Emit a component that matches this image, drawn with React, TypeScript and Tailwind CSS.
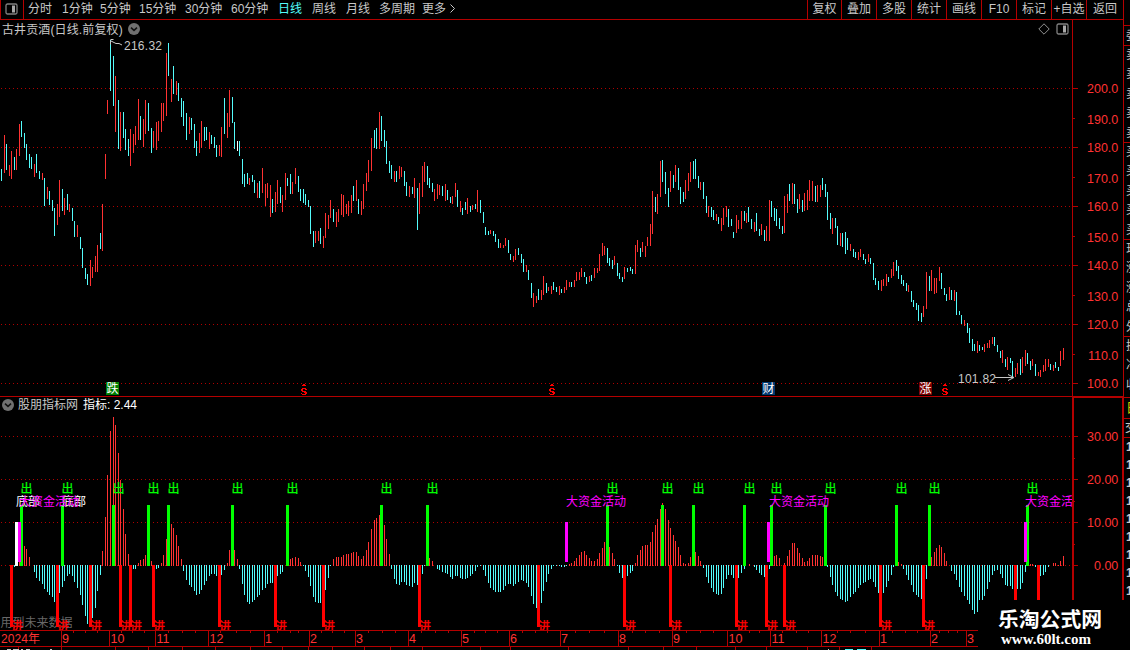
import React from "react";

const CJK = "font-['Liberation_Sans','Noto_Sans_CJK_SC',sans-serif]";

// Each candle: colour (r = up, c = down), x, high, low
const CANDLES = `c1 169 181,r4 135 173,c6 144 170,r9 165 176,r11 151 179,c14 157 170,r16 149 170,r19 124 156,c21 121 137,c24 133 148,c26 144 160,c29 154 168,c31 157 169,r34 164 177,c36 154 173,c39 171 179,r42 173 180,c44 178 206,r47 187 199,c49 191 205,c52 200 211,c54 208 236,r57 204 225,r59 180 217,c62 189 211,r64 198 215,c67 194 210,r69 204 212,c72 208 221,c74 221 237,r77 225 237,c80 237 249,c82 248 268,c85 268 279,c87 274 285,r90 260 286,r92 267 278,r95 256 272,r97 245 272,c100 233 249,r102 204 251,r105 154 179,r107 100 114,c110 40 91,c113 56 106,r115 76 132,c118 100 149,r120 112 151,c123 112 138,c125 129 150,c128 139 156,r130 129 166,r133 134 153,r135 126 145,r138 99 140,c140 116 140,r143 119 147,r145 100 134,c148 103 131,c151 128 153,r153 131 148,r156 122 150,r158 121 141,r161 103 132,r163 103 121,r166 53 116,c168 43 76,r171 79 102,c173 66 94,r176 81 95,c178 83 101,c181 98 117,c183 101 126,c186 113 140,r189 117 134,c191 118 130,c194 124 148,c196 141 156,r199 133 153,r201 121 148,c204 127 141,c206 127 140,r209 132 149,c211 135 144,c214 137 148,c216 145 157,r219 145 156,r221 127 157,c224 98 134,r227 113 138,r229 90 127,c232 97 123,c234 122 149,w237 141 151,c239 141 156,c242 159 184,c244 174 187,c247 173 184,r249 178 185,c252 175 182,c254 180 193,r257 183 198,c259 181 198,r262 168 193,r265 184 206,r267 183 198,r270 185 217,c272 199 213,r275 192 212,r277 180 204,c280 187 203,r282 195 212,r285 173 200,c287 178 186,c290 174 194,r292 182 194,r295 168 184,c298 176 192,c300 189 201,c303 189 203,c305 194 205,c308 200 207,c310 206 234,c313 231 247,r315 231 243,r318 231 241,c320 228 244,r323 236 248,r325 213 238,r328 215 229,r330 200 218,c333 209 222,r336 212 227,r338 209 222,r341 194 215,r343 195 217,r346 204 214,r348 201 216,r351 195 213,c353 186 201,r356 180 201,c358 199 214,r361 201 215,r363 184 209,r366 173 191,r368 160 182,r371 138 171,c374 130 148,c376 128 149,r379 112 149,c381 116 141,c384 130 147,c386 141 164,c389 161 173,c391 165 179,r394 171 182,c396 171 182,r399 166 179,r401 167 177,c404 171 186,c406 182 196,r409 186 197,c412 187 194,r414 178 198,c417 188 230,r419 183 214,r422 166 197,r424 162 182,c427 166 185,c429 178 188,c432 183 192,r434 189 201,r437 184 199,r439 185 195,c442 186 196,r445 184 201,c447 190 200,c450 197 203,r452 196 204,r455 183 197,c457 190 207,r460 201 212,c462 208 215,c465 202 210,r467 198 214,c470 206 212,r472 205 210,c475 204 209,r477 190 212,c480 200 213,c483 212 223,c485 227 235,c488 231 235,r490 230 234,c493 231 236,c495 234 242,c498 239 248,r500 243 248,r503 245 248,r505 238 246,c508 240 253,c510 254 260,r513 256 262,r515 249 260,c518 248 255,c521 254 263,c523 259 272,r526 265 272,c528 270 280,c531 283 298,r533 293 307,r536 296 303,c538 289 300,r541 290 300,r543 276 295,c546 283 293,r548 287 291,r551 286 294,c553 282 290,c556 287 292,r559 286 295,c561 289 293,r564 287 293,r566 280 290,r569 282 287,c571 282 287,r574 280 287,r576 272 281,r579 272 280,r581 268 277,c584 272 277,c586 277 284,r589 276 282,c591 275 281,r594 268 278,r597 268 273,r599 254 271,r602 243 256,r604 246 255,c607 248 263,c609 258 266,c612 260 269,r614 256 265,c617 263 276,c619 273 279,c622 277 282,r624 267 279,c627 268 272,c630 267 271,c632 269 274,r635 245 274,r637 240 252,c640 248 257,r642 242 252,r645 246 257,r647 237 246,r650 224 246,r652 191 234,c655 197 212,r657 194 214,r660 161 197,c662 160 182,c665 172 194,c668 188 207,r670 171 192,c673 175 188,r675 165 182,c678 168 190,c680 187 204,c683 192 202,r685 180 199,r688 173 191,r690 162 182,c693 161 179,c695 159 179,c698 176 188,r700 182 190,c703 182 199,c706 196 213,r708 206 217,c711 207 217,c713 210 220,r716 214 221,c718 217 224,r721 218 231,r723 208 225,r726 206 217,c728 209 227,c731 219 226,c733 232 238,r736 215 233,r738 220 229,r741 211 229,c744 211 221,r746 213 223,c748 207 222,c751 219 229,r754 222 232,c756 213 231,c759 229 236,r761 224 235,c764 230 241,r766 226 241,r769 200 241,c771 201 217,c774 208 221,c776 209 226,c779 218 229,c782 226 234,r784 196 233,r787 194 213,c789 184 201,r792 183 204,c794 184 204,c797 199 213,r799 194 209,c802 200 212,r804 193 211,r807 190 210,r809 180 201,r812 181 201,c815 186 202,r817 185 202,r820 185 197,c822 178 190,c825 184 197,c827 192 220,c830 213 229,r832 218 234,c835 218 228,c837 226 245,r840 233 246,c842 233 247,c845 232 254,c847 238 250,r850 244 251,c853 249 257,c855 252 258,r858 252 260,r860 249 257,c863 254 260,c865 259 264,r868 254 262,c870 258 264,c873 263 280,c875 278 285,c878 281 290,r881 280 291,r883 279 286,r886 274 286,c888 277 282,r891 269 278,r893 262 276,c896 260 271,c898 266 279,c901 275 284,c903 280 286,c906 283 291,r908 285 292,c911 291 302,c913 300 307,c916 303 310,c918 305 321,c921 313 322,r923 306 317,r926 272 309,c929 276 291,r931 270 291,r934 278 294,r936 278 293,r939 267 281,c941 273 289,c944 288 295,c946 294 301,r949 287 300,c951 290 300,r954 290 301,c956 292 315,c959 311 315,c961 315 324,r964 320 326,c967 323 333,c969 328 343,c972 339 351,c974 344 351,r977 341 353,c979 345 351,c982 347 350,r984 344 352,r987 343 348,r989 340 348,r992 337 344,c994 337 346,c997 345 352,c1000 351 358,r1002 350 363,c1005 359 367,r1007 357 370,c1010 358 363,c1012 361 377,r1015 368 377,r1017 363 374,c1020 359 375,r1022 357 373,r1025 350 366,c1027 353 364,c1030 361 370,r1032 359 366,c1035 364 376,r1038 372 376,r1040 370 377,r1043 365 372,r1045 359 371,r1048 359 367,c1050 364 370,r1053 365 371,c1055 362 368,c1058 367 371,r1060 351 366,r1063 348 360`;

// Each histogram bar: x and the y of its tip; the zero line is at 565
const HISTO = `14 567,19 560,24 546,26 549,29 557,34 572,36 578,39 581,42 584,44 589,47 592,49 595,52 597,54 602,59 593,62 587,64 581,67 576,69 574,72 576,74 582,77 588,80 595,82 605,85 616,87 624,92 618,95 608,97 591,100 575,102 551,105 517,107 475,110 431,113 417,115 425,118 453,120 480,123 509,125 534,128 554,133 569,135 569,138 563,140 560,143 559,145 555,151 561,156 569,158 568,161 563,163 555,166 539,171 524,173 528,176 535,178 546,181 559,183 571,186 580,189 585,191 587,194 591,196 595,199 594,201 590,204 585,206 581,209 576,211 574,214 574,216 576,221 575,224 570,227 563,229 550,234 550,237 559,239 569,242 584,244 595,247 602,249 604,252 602,254 600,257 597,259 595,262 590,265 588,267 584,270 583,272 583,277 576,280 574,282 572,290 559,292 558,295 557,298 558,300 562,303 566,305 571,308 577,310 586,313 597,315 602,318 603,320 603,325 590,328 578,330 566,333 559,336 557,338 557,341 557,343 555,346 554,348 554,351 553,353 552,356 552,358 556,361 559,363 556,366 550,368 542,371 529,374 520,376 518,379 515,384 525,386 539,389 554,391 569,394 579,396 584,399 585,401 582,404 582,406 585,409 586,412 587,414 583,417 585,422 574,424 566,429 558,432 561,437 569,439 570,442 572,445 573,447 574,450 577,452 579,455 576,457 576,460 578,462 579,465 579,467 578,470 576,472 574,475 571,477 567,480 566,483 570,485 576,488 583,490 588,493 590,495 592,498 592,500 592,503 590,505 586,508 584,510 584,513 586,515 584,518 582,521 580,523 581,526 583,528 587,531 596,533 604,536 608,541 603,543 591,546 582,548 574,551 569,553 566,556 566,559 566,561 567,564 567,566 566,569 564,571 563,574 561,576 558,579 555,581 552,584 551,586 555,589 558,591 561,594 561,597 559,599 553,602 548,604 542,609 547,612 553,614 559,617 566,619 573,622 578,627 576,630 573,632 571,635 563,637 555,640 550,642 546,645 545,647 545,650 542,652 532,655 525,657 519,660 509,662 503,665 509,668 520,670 528,673 535,675 541,678 547,680 555,683 563,685 564,688 563,690 557,695 552,698 556,700 561,703 568,706 577,708 583,711 588,713 592,716 594,718 595,721 594,723 588,726 579,728 575,731 575,733 578,738 578,741 573,744 569,749 564,754 567,756 570,759 573,761 575,764 577,769 569,774 556,776 555,779 558,784 563,787 556,789 550,792 543,794 543,797 548,799 553,802 558,804 562,807 561,809 558,812 555,815 555,817 555,820 556,822 557,827 567,830 577,832 585,835 592,837 596,840 599,842 600,845 602,847 601,850 597,853 594,855 592,858 588,860 585,863 583,865 582,868 580,870 579,873 582,875 587,878 593,883 593,886 587,888 581,891 575,893 567,898 562,901 564,903 569,906 575,908 580,911 585,913 592,916 595,918 597,921 599,926 579,931 557,934 552,936 548,939 545,941 547,944 553,946 561,951 571,954 574,956 580,959 587,961 592,964 596,967 600,969 604,972 610,974 614,977 612,979 600,982 600,984 596,987 589,989 582,992 575,994 571,997 570,1000 574,1002 578,1005 585,1007 586,1010 586,1012 589,1017 589,1020 589,1022 583,1025 572,1030 564,1032 564,1035 567,1040 576,1043 575,1045 572,1048 567,1053 563,1055 563,1058 565,1060 561,1063 556`;

const FILL: Record<string, string> = { r: "#ff3232", c: "#54fcfc", w: "#ffffff" };
const candles = CANDLES.split(",").map((s) => {
  const [x, t, b] = s.slice(1).split(" ").map(Number);
  return { k: s[0], x, t, b };
});
const histo = HISTO.split(",").map((s) => s.split(" ").map(Number));

const SELL = [20, 61, 112, 147, 167, 231, 286, 380, 426, 606, 661, 692, 743, 770, 824, 895, 928, 1026];
const BUY = [10, 56, 89, 119, 129, 152, 218, 274, 322, 418, 537, 623, 669, 735, 765, 783, 879, 922];
const MONTHS: [number, string][] = [[61, "9"], [109, "10"], [155, "11"], [208, "12"], [264, "1"], [309, "2"], [355, "3"], [408, "4"], [461, "5"], [509, "6"], [560, "7"], [618, "8"], [672, "9"], [727, "10"], [770, "11"], [821, "12"], [879, "1"], [930, "2"], [966, "3"]];
const WEEKS = [73, 85, 97, 121, 132, 144, 168, 182, 195, 220, 236, 250, 277, 290, 298, 321, 332, 344, 368, 382, 395, 421, 435, 448, 474, 485, 497, 522, 535, 547, 575, 589, 604, 632, 645, 659, 686, 700, 713, 749, 759, 782, 796, 808, 837, 850, 865, 892, 905, 917, 939, 948, 957];
const LOWER = [18, 61, 115, 148, 182, 215, 250, 282, 308, 332, 364, 390, 422, 480, 510, 568, 628, 663, 696, 735, 766, 807, 839, 871];

function Grid({ rows }: { rows: number[] }) {
  return (
    <g fill="#b00000" shapeRendering="crispEdges">
      {rows.map((y) => Array.from({ length: 268 }, (_, i) => <rect key={`${y}-${i}`} x={1 + i * 4} y={y} width="1" height="1" />))}
    </g>
  );
}

function PanelIcon() {
  return (
    <svg width="13" height="12" viewBox="0 0 13 12" className="shrink-0">
      <rect x="1" y="1" width="11" height="10" rx="1.5" fill="none" stroke="#808080" strokeWidth="1.3" />
      <rect x="7" y="2.5" width="3" height="7" fill="#a8a8a8" />
    </svg>
  );
}

function Chevron() {
  return (
    <svg width="12" height="12" viewBox="0 0 12 12" className="shrink-0">
      <circle cx="6" cy="6" r="6" fill="#707070" />
      <path d="M3 4.6 6 7.4 9 4.6" fill="none" stroke="#111" strokeWidth="1.5" />
    </svg>
  );
}

// x, y, width of each one-pixel run of the arrow and the "S" below it
const DIVIDEND = [[2, 0, 2], [1, 1, 4], [1, 4, 4], [0, 5, 2], [4, 5, 2], [0, 6, 2], [1, 7, 4], [3, 8, 3], [0, 9, 1], [4, 9, 2], [1, 10, 4]];

function Dividend({ x }: { x: number }) {
  return (
    <g transform={`translate(${x} 384)`} fill="#ff0000" shapeRendering="crispEdges">
      {DIVIDEND.map(([a, b, w]) => <rect key={`${a}-${b}`} x={a} y={b} width={w} height="1" />)}
    </g>
  );
}

function Toolbar() {
  const periods: [string, string][] = [
    ["分时", "w-[34px]"], ["1分钟", "w-[38px]"], ["5分钟", "w-[39px]"], ["15分钟", "w-[46px]"], ["30分钟", "w-[46px]"], ["60分钟", "w-[47px]"],
    ["日线", "w-[34px]"], ["周线", "w-[34px]"], ["月线", "w-[33px]"], ["多周期", "w-[43px]"], ["更多", "w-[27px]"],
  ];
  return (
    <header className="flex h-5 w-[1123px] shrink-0 border-b border-[#b40000] text-[12px] leading-[19px] text-[#c8c8c8]">
      <div className="flex w-6 items-center border-x border-[#b40000] pl-1 pb-0.5"><PanelIcon /></div>
      <nav className="flex pl-1">
        {periods.map(([t, w]) => (
          <span key={t} className={`${w} shrink-0 whitespace-nowrap ${t === "日线" ? "text-[#54fcfc]" : ""}`}>{t}</span>
        ))}
        <svg width="7" height="18" viewBox="0 0 7 18"><path d="M1.5 4.5 5.5 8.5 1.5 12.5" fill="none" stroke="#c8c8c8" /></svg>
      </nav>
      <div className="ml-auto flex">
        {["复权", "叠加", "多股", "统计", "画线", "F10", "标记", "+自选", "返回"].map((t, i) => (
          <span key={t} className={`${i === 0 ? "w-[34px]" : i === 8 ? "w-[37px]" : "w-[35px]"} shrink-0 whitespace-nowrap border-l border-[#b40000] text-center`}>{t}</span>
        ))}
      </div>
    </header>
  );
}

function PriceChart() {
  return (
    <div className="relative h-[376px] w-[1072px] shrink-0">
      <svg width="1072" height="376" viewBox="0 20 1072 376" className="block">
        <Grid rows={[88, 147, 206, 265, 324, 383]} />
        <g shapeRendering="crispEdges">
          {candles.map((c) => <rect key={c.x} x={c.x} y={c.t} width="1" height={c.b - c.t} fill={FILL[c.k]} />)}
        </g>
        <g fill="none" stroke="#c8c8c8">
          <path d="M110.5 39.5h3M110.5 40.5v4M111 41l5 2.5h3l3 1.5" />
          <path d="M995 377.5h18M1008 374.5l6 3-6 3" />
        </g>
        <g fill="#c8c8c8" fontSize="12">
          <text x="124" y="50" textLength="38">216.32</text>
          <text x="958" y="383" textLength="38">101.82</text>
        </g>
        {[[106, "跌", "#008000"], [762, "财", "#003870"], [919, "涨", "#7c0000"]].map(([x, t, f]) => (
          <g key={t}>
            <rect x={x} y="382" width="13" height="13" fill={f as string} />
            <text x={Number(x) + 0.5} y="393" fontSize="12" fill="#fff">{t}</text>
          </g>
        ))}
        {[301, 549, 942].map((x) => <Dividend key={x} x={x} />)}
      </svg>
      <div className="absolute inset-x-0 top-0 flex h-[18px] items-center justify-between pl-0.5 pr-[3px] text-[12px] text-[#c8c8c8]">
        <div className="flex items-center gap-[5px]"><span className="pt-px tracking-[0.12px]">古井贡酒(日线.前复权)</span><Chevron /></div>
        <div className="flex items-center gap-[6px]">
          <svg width="12" height="12" viewBox="0 0 12 12"><path d="M6 .8 11.2 6 6 11.2.8 6z" fill="none" stroke="#909090" /></svg>
          <PanelIcon />
        </div>
      </div>
    </div>
  );
}

function IndicatorChart() {
  return (
    <div className="relative h-[233px] w-[1072px] shrink-0 overflow-hidden">
      <svg width="1072" height="233" viewBox="0 397 1072 233" className="block">
        <Grid rows={[436, 479, 522, 565]} />
        <text x="0.5" y="627" fontSize="12" fill="#686868">用到未来数据</text>
        <g shapeRendering="crispEdges">
          {histo.map(([x, y]) => (
            <rect key={x} x={x} y={Math.min(y, 565)} width="1" height={Math.max(1, y > 565 ? y - 565 : 566 - y)} fill={y > 565 ? FILL.c : FILL.r} />
          ))}
        </g>
        <g fill="#ff0000" stroke="#ff0000" strokeWidth="0.4" fontSize="12">
          {BUY.map((x) => <text key={x} x={x + 1} y="630.5">进</text>)}
        </g>
        <g shapeRendering="crispEdges">
          {BUY.map((x) => <rect key={x} x={x} y="565" width="3" height="62" fill="#ff0000" />)}
          {[1014, 1037].map((x) => <rect key={x} x={x} y="565" width="3" height="35" fill="#ff0000" />)}
          {SELL.map((x) => <rect key={x} x={x} y="505" width="3" height="61" fill="#00ff00" />)}
          {[18, 565, 767, 1024].map((x) => <rect key={x} x={x} y="522" width="3" height="40" fill="#ff00ff" />)}
          <rect x="15" y="522" width="3" height="44" fill="#fff" />
        </g>
        <g fontSize="12" fill="#fff"><text x="16" y="506">底部</text><text x="62" y="506">底部</text></g>
        <g fontSize="12" fill="#ff00ff">
          {[19, 566, 769, 1025].map((x) => <text key={x} x={x} y="506">大资金活动</text>)}
        </g>
        <g fontSize="12" fill="#00ff00" stroke="#00ff00" strokeWidth="0.25">
          {SELL.map((x) => <text key={x} x={x + 0.5} y="493">出</text>)}
        </g>
      </svg>
      <div className="absolute left-0.5 top-0 flex h-4 items-center text-[12px] text-[#c8c8c8]">
        <Chevron /><span className="ml-1 whitespace-nowrap">股朋指标网</span>
        <span className="ml-[5px] whitespace-nowrap text-white">指标: 2.44</span>
      </div>
    </div>
  );
}

function TimeAxis() {
  return (
    <div className="h-5 w-[978px] shrink-0">
      <svg width="978" height="20" viewBox="0 630 978 20" className="block">
        <g fill="#b40000" shapeRendering="crispEdges">
          <rect x="0" y="630" width="978" height="1" />
          <rect x="0" y="646" width="978" height="1" />
          {MONTHS.map(([x]) => <rect key={x} x={x} y="630" width="1" height="16" />)}
          {WEEKS.map((x) => <rect key={x} x={x} y="631" width="1" height="2" />)}
          {LOWER.map((x) => <rect key={x} x={x} y="647" width="1" height="3" />)}
        </g>
        <g fill="#ff3232" fontSize="12">
          <text x="1" y="643" textLength="39">2024年</text>
          {MONTHS.map(([x, m]) => <text key={x} x={x + (m.length > 1 ? 1.5 : 1)} y="643" fontSize="12.5">{m}</text>)}
        </g>
        <path d="M7 649.5h4m2 0h6m2 0h2m3 0h4M50 649.5h2M828 649.5h1" stroke="#c8c8c8" />
        <path d="M845 649.5h8m4 0h9" stroke="#54fcfc" />
      </svg>
    </div>
  );
}

function ValueAxis() {
  const upper = Array.from({ length: 11 }, (_, i) => ({ t: (200 - i * 10).toFixed(1), y: i % 2 ? 119 + 59 * ((i - 1) / 2) : 88 + 59 * (i / 2) }));
  const lower = [["30.00", 436], ["20.00", 479], ["10.00", 522], ["0.00", 565]] as [string, number][];
  return (
    <svg width="51" height="580" viewBox="1072 20 51 580" className="block shrink-0">
      <g fill="#b40000" shapeRendering="crispEdges">
        <rect x="1072" y="20" width="1" height="580" />
        <rect x="1073" y="397" width="1" height="203" />
        <rect x="1072" y="396" width="51" height="2" />
        <rect x="1122" y="397" width="1" height="203" />
        {upper.map((u, i) => <rect key={u.t} x="1073" y={i % 2 ? u.y - 1 : u.y} width={i % 2 ? 2 : 5} height="1" />)}
        {lower.map(([t, y]) => <rect key={t} x="1073" y={y} width="5" height="1" />)}
        {[458, 501, 544].map((y) => <rect key={y} x="1074" y={y} width="1" height="1" />)}
      </g>
      <g fill="#ff3232" fontSize="12.5" textAnchor="end">
        {upper.map((u) => <text key={u.t} x="1118.3" y={u.y + 5}>{u.t}</text>)}
        {lower.map(([t, y]) => <text key={t} x="1118.3" y={y + 5}>{t}</text>)}
      </g>
    </svg>
  );
}

function QuoteStrip() {
  const row = "h-[19.4px] leading-[19px]";
  return (
    <aside className="h-[600px] w-[7px] shrink-0 overflow-hidden border-l border-[#b40000] text-[12px] text-[#c8c8c8]">
      <div className="h-[26px] border-b border-[#b40000]" />
      <div className="h-5 border-b border-[#b40000] pl-0.5 leading-5">委</div>
      {["卖卖卖卖卖", "买买买买买", "现涨涨总外"].map((s) => (
        <div key={s} className="h-[97px] border-b border-[#b40000] pl-0.5">
          {s.split("").map((c, i) => <div key={i} className={row}>{c}</div>)}
        </div>
      ))}
      <div className="h-[61px] border-b border-[#b40000] pl-0.5">
        {["换", "净", "收"].map((c) => <div key={c} className={row}>{c}</div>)}
      </div>
      <div className="h-[21px] border-b border-[#b40000] pl-0.5 text-[13px] leading-5 text-[#d0d000]">日</div>
      <div className="h-[19px] border-b border-[#b40000] pl-px leading-[18px]">交</div>
      {Array.from({ length: 9 }, (_, i) => <div key={i} className="h-[18px] pl-0.5 font-bold leading-[18px]">1</div>)}
    </aside>
  );
}

export default function App() {
  return (
    <div className={`relative flex h-[650px] w-[1130px] overflow-hidden bg-black ${CJK}`}>
      <div className="flex w-[1123px] flex-col">
        <Toolbar />
        <div className="flex">
          <main className="flex w-[1072px] flex-col">
            <PriceChart />
            <div className="h-px shrink-0 bg-[#b40000]" />
            <IndicatorChart />
            <TimeAxis />
          </main>
          <ValueAxis />
        </div>
      </div>
      <QuoteStrip />
      <div className="absolute bottom-0 right-0 h-[50px] w-[152px] bg-black pl-5 pt-[7px] text-white">
        <div className="whitespace-nowrap text-[20.8px] font-bold leading-[26px]">乐淘公式网</div>
        <div className="-mt-px pl-[3px] font-['Liberation_Serif',serif] text-[15px] font-bold leading-[14px]">www.60lt.com</div>
      </div>
    </div>
  );
}
